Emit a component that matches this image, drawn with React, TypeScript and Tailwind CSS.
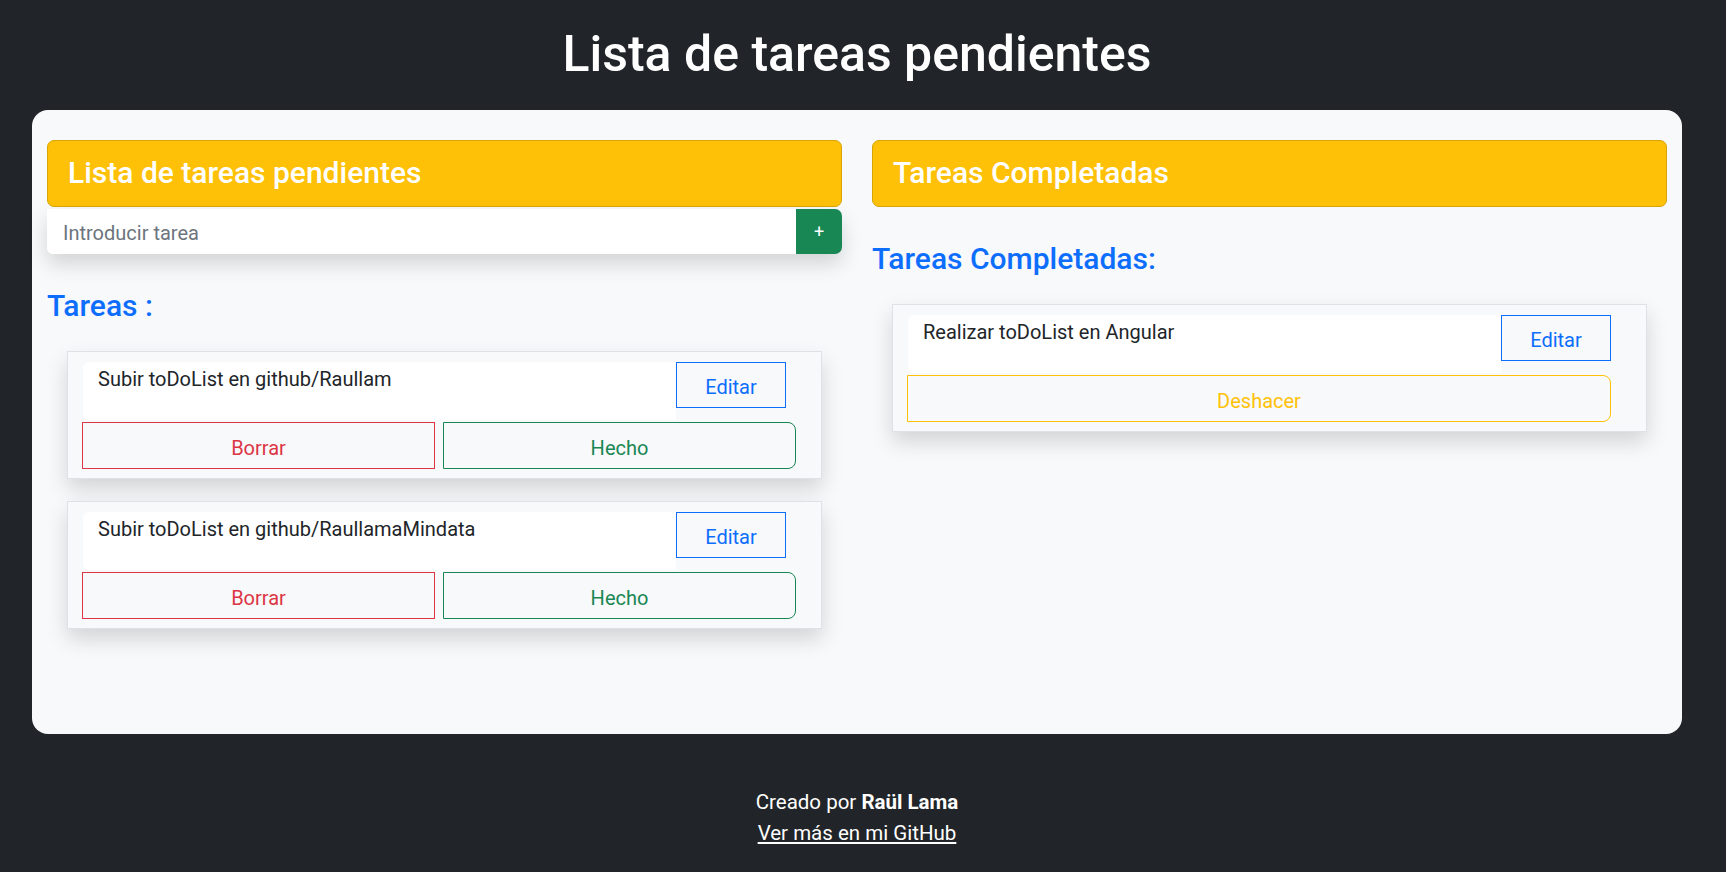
import React from "react";

interface TaskCardProps {
  text: string;
  done?: boolean;
}

const TaskCard: React.FC<TaskCardProps> = ({ text, done }) => {
  return (
    <div className="mx-[20px] h-[128px] border border-[#dee2e6] bg-[#f8f9fa] pl-[14px] pt-[10px] shadow-[0_10px_20px_rgba(0,0,0,0.15)]">
      <div className="flex items-start">
        <div className="ml-[1px] h-[58px] w-[593px] rounded-l-[6px] bg-white pl-[15px] pt-[2px] text-[20px] leading-[31px] text-[#212529]">
          {text}
        </div>
        <button className="h-[46px] w-[110px] border border-[#0d6efd] pt-[4px] text-[20px] text-[#0d6efd]">
          Editar
        </button>
      </div>
      {done ? (
        <button className="mt-[2px] h-[47px] w-[704px] rounded-r-[8px] border border-[#ffc107] pt-[4px] text-[20px] text-[#ffc107]">
          Deshacer
        </button>
      ) : (
        <div className="mt-[2px] flex gap-[8px]">
          <button className="h-[47px] w-[353px] border border-[#dc3545] pt-[4px] text-[20px] text-[#dc3545]">
            Borrar
          </button>
          <button className="h-[47px] w-[353px] rounded-r-[8px] border border-[#198754] pt-[4px] text-[20px] text-[#198754]">
            Hecho
          </button>
        </div>
      )}
    </div>
  );
};

const CardHeader: React.FC<{ title: string }> = ({ title }) => {
  return (
    <div className="h-[67px] rounded-[7px] border border-[#d9a406] bg-[#ffc107] px-[20px] pt-[13px]">
      <h2 className="text-[30px] font-medium leading-[37px] text-white">{title}</h2>
    </div>
  );
};

export default function App() {
  return (
    <div className="min-h-screen bg-[#212529] pr-3 font-['Roboto',sans-serif]">
      <header className="pb-[25px] pt-[23px] text-center">
        <h1 className="text-[50px] font-medium leading-[62px] text-white">
          Lista de tareas pendientes
        </h1>
      </header>

      <main className="mx-8 grid h-[624px] grid-cols-2 gap-[30px] rounded-2xl bg-[#f8f9fa] px-[15px] pt-[30px]">
        <section>
          <CardHeader title="Lista de tareas pendientes" />
          <div className="mt-[2px] flex h-[45px] rounded-bl-[6px] rounded-r-[7px] shadow-[0_10px_20px_rgba(0,0,0,0.15)]">
            <input
              type="text"
              placeholder="Introducir tarea"
              className="h-full min-w-0 flex-1 rounded-bl-[6px] bg-white pl-[16px] pt-[3px] text-[20px] text-[#212529] outline-none placeholder:text-[#6c757d]"
            />
            <button className="h-full w-[46px] rounded-r-[7px] bg-[#198754] text-[18px] text-white">
              +
            </button>
          </div>
          <h3 className="mb-[27px] mt-[33px] text-[30px] font-medium leading-[37px] text-[#0d6efd]">
            Tareas :
          </h3>
          <div className="flex flex-col gap-[22px]">
            <TaskCard text="Subir toDoList en github/Raullam" />
            <TaskCard text="Subir toDoList en github/RaullamaMindata" />
          </div>
        </section>

        <section>
          <CardHeader title="Tareas Completadas" />
          <h3 className="mb-[27px] mt-[33px] text-[30px] font-medium leading-[37px] text-[#0d6efd]">
            Tareas Completadas:
          </h3>
          <TaskCard text="Realizar toDoList en Angular" done />
        </section>
      </main>

      <footer className="pb-[30px] pt-[53px] text-center text-[20.5px] leading-[31px] text-white">
        <p>
          Creado por <strong className="font-bold">Raül Lama</strong>
        </p>
        <a href="#" className="underline">
          Ver más en mi GitHub
        </a>
      </footer>
    </div>
  );
}
